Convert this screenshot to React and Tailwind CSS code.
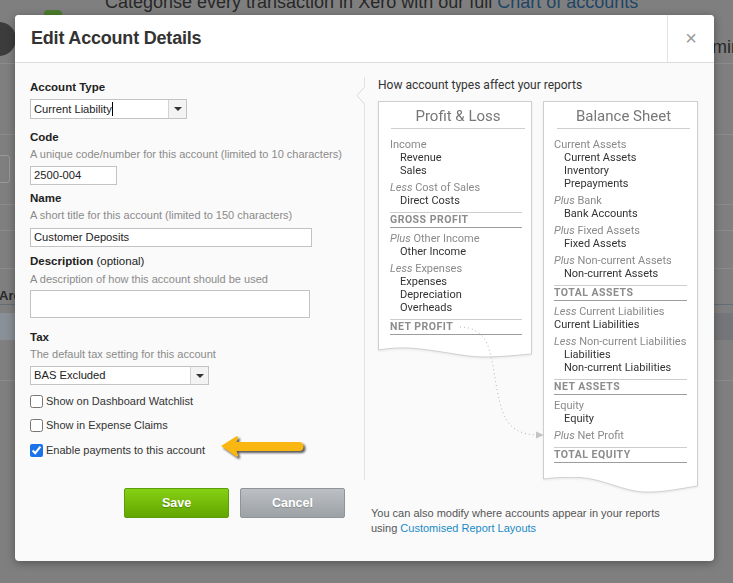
import React from "react";

const PL = [
  { h: [null, "Income"], items: ["Revenue", "Sales"] },
  { h: ["Less", "Cost of Sales"], items: ["Direct Costs"] },
  { total: "GROSS PROFIT" },
  { h: ["Plus", "Other Income"], items: ["Other Income"] },
  { h: ["Less", "Expenses"], items: ["Expenses", "Depreciation", "Overheads"] },
  { total: "NET PROFIT" },
];

const BS = [
  { h: [null, "Current Assets"], items: ["Current Assets", "Inventory", "Prepayments"] },
  { h: ["Plus", "Bank"], items: ["Bank Accounts"] },
  { h: ["Plus", "Fixed Assets"], items: ["Fixed Assets"] },
  { h: ["Plus", "Non-current Assets"], items: ["Non-current Assets"] },
  { total: "TOTAL ASSETS" },
  { h: ["Less", "Current Liabilities"], items: ["Current Liabilities"], flat: true },
  { h: ["Less", "Non-current Liabilities"], items: ["Liabilities", "Non-current Liabilities"] },
  { total: "NET ASSETS" },
  { h: [null, "Equity"], items: ["Equity"] },
  { h: ["Plus", "Net Profit"], items: [] },
  { total: "TOTAL EQUITY" },
];

function Rows({ data }) {
  return (
    <div className="flex flex-col">
      {data.map((g, i) => {
        const first = i === 0;
        if (g.total) {
          return (
            <div
              key={i}
              className="mt-[5px] border-t border-b border-t-[#cdcdcd] border-b-[#9d9d9d] text-[10.5px] leading-[14px] font-bold tracking-[0.5px] text-[#8c8c8c]"
            >
              {g.total}
            </div>
          );
        }
        return (
          <div key={i} className={first ? "" : "mt-[4px]"}>
            <div className="text-[11px] leading-[13px] text-[#8a8a8a] whitespace-nowrap">
              {g.h[0] && <span className="italic">{g.h[0]} </span>}
              {g.h[1]}
            </div>
            {g.items.map((it) => (
              <div
                key={it}
                className={
                  g.flat
                    ? "text-[11px] leading-[13px] text-[#333] whitespace-nowrap"
                    : "pl-[10px] text-[11px] leading-[13px] text-[#333] whitespace-nowrap"
                }
              >
                {it}
              </div>
            ))}
          </div>
        );
      })}
    </div>
  );
}

function Label({ className = "", children }) {
  return (
    <div className={"h-[16px] leading-[16px] text-[11.5px] font-bold text-[#222] whitespace-nowrap " + className}>
      {children}
    </div>
  );
}

function Hint({ className = "", children }) {
  return (
    <div className={"h-[16px] leading-[16px] text-[11px] text-[#8a8a8a] whitespace-nowrap " + className}>
      {children}
    </div>
  );
}

function Caret() {
  return (
    <div className="w-0 h-0 border-l-[4px] border-r-[4px] border-t-[4px] border-l-transparent border-r-transparent border-t-[#333]" />
  );
}

function Check({ className = "", checked, children, extra }) {
  return (
    <div className={"relative flex items-center h-[16px] gap-[3px] " + className}>
      <input
        type="checkbox"
        defaultChecked={checked}
        className="m-0 w-[13px] h-[13px] accent-[#1a73e8]"
      />
      <span className="text-[11px] text-[#333] whitespace-nowrap">{children}</span>
      {extra}
    </div>
  );
}

function YellowArrow() {
  return (
    <svg
      className="absolute left-[190px] top-[-8px] drop-shadow-[2px_2px_1px_rgba(0,0,0,0.65)]"
      width="88"
      height="28"
      viewBox="0 0 88 28"
    >
      <path
        d="M1 12 L16 2.5 Q18.5 1.5 18 4 L16.5 8 L79 8 Q83.5 8 83.5 12.5 Q83.5 17 79 17 L16.5 17 L18 21 Q18.5 23.5 16 22.5 Z"
        fill="#fbb711"
      />
    </svg>
  );
}

function Background() {
  return (
    <div className="flex flex-col">
      <div className="-mt-[9px] h-[22px] ml-[105px] text-[18px] leading-[22px] text-[#272727] whitespace-nowrap">
        Categorise every transaction in Xero with our full <span className="text-[#1d4666]">Chart of accounts</span>
      </div>
      <div className="mt-[23px] h-[22px] ml-[690px] text-[18px] leading-[22px] text-[#272727] whitespace-nowrap">
        Admin
      </div>
      <div className="mt-[5px] h-px bg-[#8c8c8c]" />
      <div className="mt-[70px] h-px bg-[#8c8c8c]" />
      <div className="mt-[20px] -ml-[6px] w-[16px] h-[28px] border border-[#9a9a9a] rounded-[3px]" />
      <div className="mt-[21px] h-px bg-[#8c8c8c]" />
      <div className="mt-[25px] h-px bg-[#8c8c8c]" />
      <div className="mt-[37px] h-px bg-[#8c8c8c]" />
      <div className="mt-[19px] h-[16px] leading-[16px] -ml-[1px] text-[13px] font-bold text-[#2a2a2a]">Archive</div>
      <div className="h-px bg-[#5f6e79]" />
      <div className="mt-[8px] h-[27px] flex">
        <div className="w-[15px] bg-[#8a9097]" />
        <div className="flex-1 bg-[#747679]" />
      </div>
      <div className="mt-[40px] h-px bg-[#8c8c8c]" />
    </div>
  );
}

function Panel({ title, data, w, vw, h, wave, waveH, pad, lineCls }) {
  return (
    <div className={"flex flex-col drop-shadow-[0_1px_1px_rgba(0,0,0,0.07)] " + w}>
      <div className={"bg-white border-t border-x border-[#cfcfcf] flex flex-col " + h + " " + pad}>
        <div className={"mt-[5px] pb-[3px] border-b border-[#cfcfcf] text-center font-['Roboto',sans-serif] text-[15px] leading-[18px] text-[#777] " + lineCls}>
          {title}
        </div>
        <div className="mt-[9px] font-['Roboto',sans-serif]">
          <Rows data={data} />
        </div>
      </div>
      <svg width="100%" height={waveH} viewBox={`0 0 ${vw} ${waveH}`} className="block -mt-px">
        <path d={wave} fill="#fff" stroke="#cfcfcf" strokeWidth="1" />
      </svg>
    </div>
  );
}

function Modal() {
  return (
    <div className="absolute left-[15px] top-[15px] w-[699px] h-[546px] bg-[#fafafa] rounded-[4px] shadow-[0_2px_10px_rgba(0,0,0,0.35)] overflow-hidden flex flex-col">
      <div className="h-[48px] flex bg-white border-b border-[#dcdcdc] shrink-0">
        <div className="flex-1 flex items-center pl-[16px] text-[18px] font-bold text-[#333] tracking-[-0.2px]">
          Edit Account Details
        </div>
        <div className="w-[47px] border-l border-[#e3e3e3] flex items-center justify-center text-[#9a9a9a] text-[20px] leading-none pb-[2px]">
          ×
        </div>
      </div>

      <div className="flex">
        {/* left form */}
        <div className="w-[349px] pl-[15px] pr-[19px] pt-[16px] flex flex-col">
          <Label>Account Type</Label>
          <div className="mt-[4px] flex h-[20px] w-[157px] border border-[#c3c3c3] bg-white">
            <div className="flex-1 flex items-center pl-[3px] text-[11.2px] text-[#222]">
              Current Liability<span className="w-px h-[14px] bg-black" />
            </div>
            <div className="w-[18px] border-l border-[#d3d3d3] bg-[#f3f3f3] flex items-center justify-center">
              <Caret />
            </div>
          </div>

          <Label className="mt-[10px]">Code</Label>
          <Hint className="mt-[1px]">A unique code/number for this account (limited to 10 characters)</Hint>
          <div className="mt-[4px] h-[19px] w-[87px] border border-[#c3c3c3] bg-white flex items-center pl-[3px] text-[11.2px] text-[#222]">
            2500-004
          </div>

          <Label className="mt-[5px]">Name</Label>
          <Hint className="mt-[1px]">A short title for this account (limited to 150 characters)</Hint>
          <div className="mt-[5px] h-[19px] w-[282px] border border-[#c3c3c3] bg-white flex items-center pl-[3px] text-[11.2px] text-[#222]">
            Customer Deposits
          </div>

          <Label className="mt-[6px]">
            Description <span className="font-normal">(optional)</span>
          </Label>
          <Hint className="mt-[2px]">A description of how this account should be used</Hint>
          <div className="mt-[3px] h-[28px] w-[280px] border border-[#c3c3c3] bg-white" />

          <Label className="mt-[11px]">Tax</Label>
          <Hint className="mt-[1px]">The default tax setting for this account</Hint>
          <div className="mt-[4px] flex h-[19px] w-[179px] border border-[#c3c3c3] bg-white">
            <div className="flex-1 flex items-center pl-[3px] text-[11.2px] text-[#222]">BAS Excluded</div>
            <div className="w-[18px] border-l border-[#d3d3d3] bg-[#f3f3f3] flex items-center justify-center">
              <Caret />
            </div>
          </div>

          <Check className="mt-[8px]">Show on Dashboard Watchlist</Check>
          <Check className="mt-[8px]">Show in Expense Claims</Check>
          <Check className="mt-[9px]" checked extra={<YellowArrow />}>
            Enable payments to this account
          </Check>

          <div className="mt-[30px] flex justify-end gap-[11px]">
            <button className="w-[105px] h-[30px] rounded-[2px] border border-[#5b9e0c] bg-linear-to-b from-[#86d014] to-[#62a600] text-white font-bold text-[12.5px] [text-shadow:0_1px_1px_rgba(0,0,0,0.25)]">
              Save
            </button>
            <button className="w-[105px] h-[30px] rounded-[2px] border border-[#8f9499] bg-linear-to-b from-[#bcc0c4] to-[#9ca1a6] text-white font-bold text-[12.5px] [text-shadow:0_1px_1px_rgba(0,0,0,0.2)]">
              Cancel
            </button>
          </div>
        </div>

        {/* separator */}
        <div className="relative w-px h-[403px] mt-[14px] bg-[#e2e2e2] shrink-0">
          <svg className="absolute left-[-8px] top-[10px]" width="10" height="17" viewBox="0 0 10 17">
            <rect x="7" y="0" width="3" height="17" fill="#fafafa" />
            <path d="M8.5 0 L1 8.5 L8.5 17" fill="#fafafa" stroke="#d9d9d9" strokeWidth="1" />
          </svg>
        </div>

        {/* right info */}
        <div className="flex-1 pl-[13px] pt-[14px] flex flex-col">
          <div className="font-['Roboto',sans-serif] text-[12px] leading-[16px] text-[#333]">
            How account types affect your reports
          </div>
          <div className="relative mt-[8px] flex gap-[11px] items-start">
            <Panel
              title="Profit & Loss"
              data={PL}
              w="w-[154px]"
              vw={154}
              h="h-[247px]"
              pad="pl-[11px] pr-[9px]"
              lineCls="ml-[1px] -mr-[3px]"
              waveH={12}
              wave="M0.5 0 V3 C10 1.5 20 0.5 30 1 C55 2 85 10 105 10 C125 10 140 8 153.5 7 V0"
            />
            <Panel
              title="Balance Sheet"
              data={BS}
              w="w-[155px]"
              vw={155}
              h="h-[377px]"
              pad="pl-[10px] pr-[10px]"
              lineCls="ml-[3px] -mr-[3px]"
              waveH={18}
              wave="M0.5 0 V2 C12 0.5 25 0 37 0.5 C60 2 80 14 100 15 C120 16 140 11 154.5 9 V0"
            />
            <svg className="absolute left-0 top-0 pointer-events-none" width="180" height="345" viewBox="0 0 180 345">
              <path
                d="M82 226 C95 226 105 232 110 245 C118 270 118 300 128 318 C135 330 145 333 158 334"
                fill="none"
                stroke="#b5b5b5"
                strokeWidth="1"
                strokeDasharray="1 3"
              />
              <path d="M158 330.5 L166 334 L158 337.5 Z" fill="#c4c4c4" />
            </svg>
          </div>
          <div className="-ml-[7px] mt-[11px] text-[11px] leading-[15px] text-[#555]">
            <div>You can also modify where accounts appear in your reports</div>
            <div>
              using <span className="text-[#1a8ac6]">Customised Report Layouts</span>
            </div>
          </div>
        </div>
      </div>
    </div>
  );
}

export default function App() {
  return (
    <div className="relative w-[733px] h-[583px] overflow-hidden bg-[#7f7f7f] font-['Liberation_Sans',Arial,sans-serif]">
      <Background />
      <div className="absolute left-[-18px] top-[22px] w-[34px] h-[34px] rounded-full bg-[#3c3c3c]" />
      <div className="absolute left-[44px] top-[10px] w-[18px] h-[8px] rounded-full bg-[#4d7d2c]" />
      <Modal />
    </div>
  );
}
